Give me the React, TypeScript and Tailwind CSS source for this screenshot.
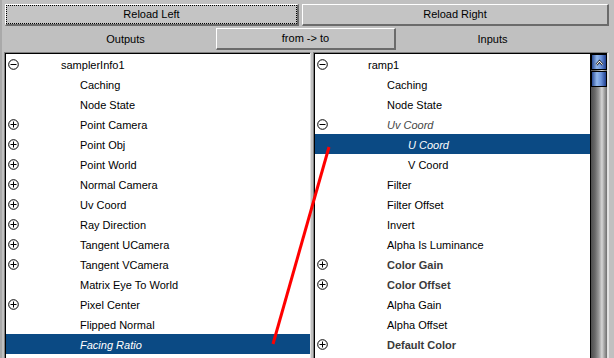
type Row = {
  label: string;
  level: 0 | 1 | 2;
  icon?: "plus" | "minus";
  kind?: "bold" | "italic";
  selected?: boolean;
};

const outputs: Row[] = [
  { label: "samplerInfo1", level: 0, icon: "minus" },
  { label: "Caching", level: 1 },
  { label: "Node State", level: 1 },
  { label: "Point Camera", level: 1, icon: "plus" },
  { label: "Point Obj", level: 1, icon: "plus" },
  { label: "Point World", level: 1, icon: "plus" },
  { label: "Normal Camera", level: 1, icon: "plus" },
  { label: "Uv Coord", level: 1, icon: "plus" },
  { label: "Ray Direction", level: 1, icon: "plus" },
  { label: "Tangent UCamera", level: 1, icon: "plus" },
  { label: "Tangent VCamera", level: 1, icon: "plus" },
  { label: "Matrix Eye To World", level: 1 },
  { label: "Pixel Center", level: 1, icon: "plus" },
  { label: "Flipped Normal", level: 1 },
  { label: "Facing Ratio", level: 1, kind: "italic", selected: true },
];

const inputs: Row[] = [
  { label: "ramp1", level: 0, icon: "minus" },
  { label: "Caching", level: 1 },
  { label: "Node State", level: 1 },
  { label: "Uv Coord", level: 1, icon: "minus", kind: "italic" },
  { label: "U Coord", level: 2, kind: "italic", selected: true },
  { label: "V Coord", level: 2 },
  { label: "Filter", level: 1 },
  { label: "Filter Offset", level: 1 },
  { label: "Invert", level: 1 },
  { label: "Alpha Is Luminance", level: 1 },
  { label: "Color Gain", level: 1, icon: "plus", kind: "bold" },
  { label: "Color Offset", level: 1, icon: "plus", kind: "bold" },
  { label: "Alpha Gain", level: 1 },
  { label: "Alpha Offset", level: 1 },
  { label: "Default Color", level: 1, icon: "plus", kind: "bold" },
];

const indent = ["pl-0", "pl-[19px]", "pl-[40px]"];

function ToggleIcon({ type }: { type: "plus" | "minus" }) {
  return (
    <svg viewBox="0 0 11 11" className="h-[11px] w-[11px]" fill="none" stroke="#000" strokeWidth="1">
      <circle cx="5.5" cy="5.5" r="4.8" />
      <path d="M2.5 5.5h6" />
      {type === "plus" && <path d="M5.5 2.5v6" />}
    </svg>
  );
}

function TreeRow({ row, gutter }: { row: Row; gutter: string }) {
  let text = "text-black";
  if (row.kind === "bold") text = "font-bold text-[#3a3a3a]";
  if (row.kind === "italic") text = "italic text-[#444]";
  if (row.selected) text = "italic text-white";
  return (
    <div className={`flex h-5 items-start ${row.selected ? "bg-[#0b4a84]" : ""}`}>
      <span className={`flex h-5 shrink-0 items-center pl-[2px] pt-px ${gutter}`}>
        {row.icon && <ToggleIcon type={row.icon} />}
      </span>
      <span className={`whitespace-nowrap pt-[6px] ${indent[row.level]} ${text}`}>{row.label}</span>
    </div>
  );
}

function Scrollbar() {
  return (
    <div className="flex w-[17px] shrink-0 flex-col border-l border-black bg-[linear-gradient(to_right,#4e4e4e_0%,#6a6a6a_25%,#9c9c9c_50%,#d6d6d6_68%,#a6a6a6_82%,#6e6e6e_100%)]">
      <div className="flex h-4 items-center justify-center border border-black bg-[linear-gradient(to_right,#2a4c96,#93b8ec_35%,#6a92da_65%,#1f3d8c)]">
        <svg viewBox="0 0 10 8" className="h-[7px] w-[9px]" fill="none">
          <path d="M1.5 6.5 5 2.5l3.5 4" stroke="#000" strokeWidth="2.6" />
          <path d="M1.5 6.5 5 2.5l3.5 4" stroke="#fff" strokeWidth="1.2" />
        </svg>
      </div>
      <div className="mt-px h-4 border border-black bg-[linear-gradient(to_right,#2a4c96,#93b8ec_35%,#6a92da_65%,#1f3d8c)]" />
    </div>
  );
}

function Button({ label, focused, className }: { label: string; focused?: boolean; className: string }) {
  return (
    <div
      className={`flex items-center justify-center border-t border-l border-t-white border-l-white border-r-2 border-b-2 border-r-[#6b6b6b] border-b-[#6b6b6b] bg-[#c4c4c4] text-black ${className}`}
    >
      {focused ? (
        <span className="flex h-full w-full items-center justify-center border border-dotted border-black">{label}</span>
      ) : (
        label
      )}
    </div>
  );
}

export default function App() {
  return (
    <div
      className="relative h-[358px] w-[614px] overflow-hidden border-l-2 border-l-[#a9a9a9] bg-[#c0c0c0] text-[11px] leading-none"
      style={{ fontFamily: '"Liberation Sans", Arial, sans-serif' }}
    >
      <div className="flex gap-[3px] pl-[3px] pt-[4px]">
        <Button label="Reload Left" focused className="h-[22px] w-[294px]" />
        <Button label="Reload Right" className="h-[22px] w-[307px]" />
      </div>

      <div className="mt-[2px] flex h-[22px] items-center pl-[3px]">
        <span className="w-[211px] pl-[30px] text-center">Outputs</span>
        <Button label="from -> to" className="h-[22px] w-[180px]" />
        <span className="w-[193px] text-center">Inputs</span>
      </div>

      <div className="mt-[2px] flex gap-[2px] pl-[2px]">
        <div className="h-[306px] w-[307px] border-t border-l border-r border-t-[#808080] border-l-[#808080] border-r-[#e2e2e2]">
          <div className="h-full border-t border-l border-black bg-white">
            {outputs.map((r) => (
              <TreeRow key={r.label} row={r} gutter="w-[55px]" />
            ))}
          </div>
        </div>
        <div className="flex h-[306px] w-[296px] border-t border-l border-r-2 border-t-[#808080] border-l-[#808080] border-r-[#e2e2e2]">
          <div className="flex h-full flex-1 border-t border-l border-black bg-white">
            <div className="flex-1">
              {inputs.map((r) => (
                <TreeRow key={r.label} row={r} gutter="w-[53px]" />
              ))}
            </div>
            <Scrollbar />
          </div>
        </div>
      </div>

      <svg className="pointer-events-none absolute inset-0" width="614" height="358">
        <line x1="271" y1="344" x2="327" y2="147" stroke="#ff0000" strokeWidth="3" />
      </svg>
    </div>
  );
}
